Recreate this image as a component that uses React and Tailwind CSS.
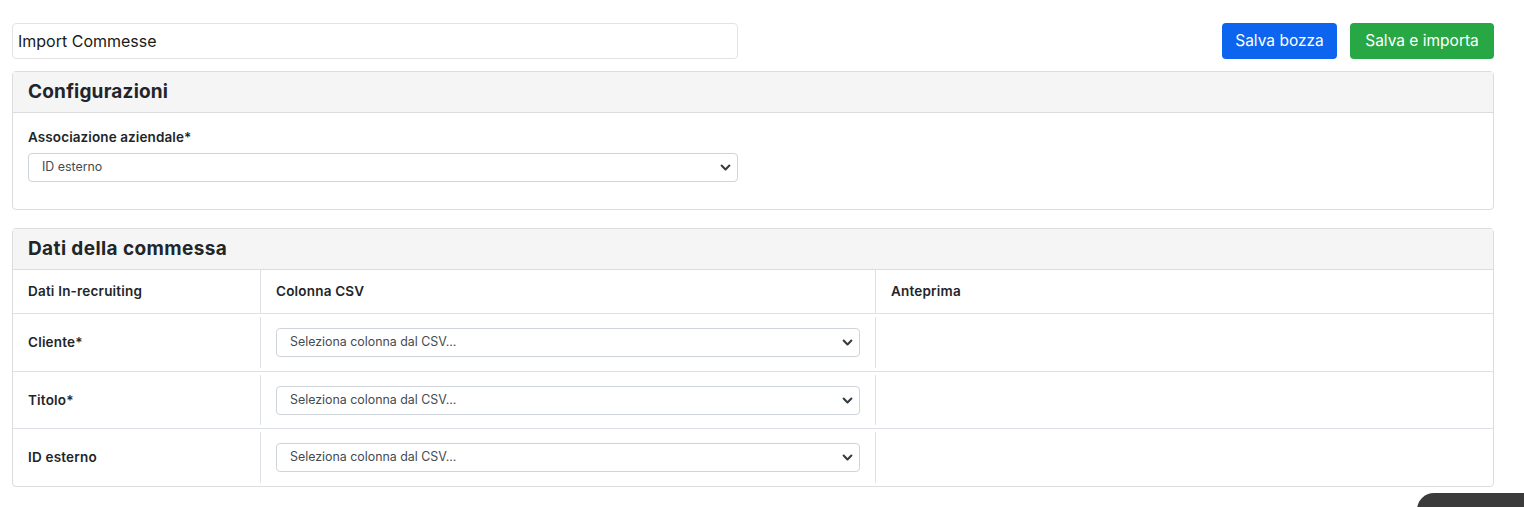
import React from "react";

function Chevron() {
  return (
    <svg width="11" height="7" viewBox="0 0 14 9" className="shrink-0">
      <path d="M2 2 L7 7 L12 2" fill="none" stroke="#343a40" strokeWidth="2.6" strokeLinecap="round" strokeLinejoin="round" />
    </svg>
  );
}

function Select({ text, className = "" }) {
  return (
    <div className={"flex h-[29px] items-center justify-between rounded-[4px] border border-[#ced4da] bg-white pl-[13px] pr-[6px] " + className}>
      <span className="text-[12.4px] text-[#444b52]">{text}</span>
      <Chevron />
    </div>
  );
}

const rows = [
  { label: "Cliente*", cls: "h-[58px] border-b border-[#dee2e6]" },
  { label: "Titolo*", cls: "h-[57px] border-b border-[#dee2e6]" },
  { label: "ID esterno", cls: "h-[57px]" },
];

export default function App() {
  return (
    <div className="relative min-h-[507px] bg-white px-[12px] pt-[23px] text-[#212529]" style={{ fontFamily: "Inter, 'Noto Sans', sans-serif" }}>
      <div className="flex items-center justify-between pr-[18px]">
        <div className="flex h-[36px] w-[726px] items-center rounded-[4px] border border-[#e3e3e3] pl-[5px] text-[16px] text-[#1a1a1a]">
          Import Commesse
        </div>
        <div className="flex gap-[13px]">
          <button className="h-[36px] w-[115px] rounded-[4px] bg-[#0d64ee] text-[15.5px] text-white">Salva bozza</button>
          <button className="h-[36px] w-[144px] rounded-[4px] bg-[#28a745] text-[15.5px] text-white">Salva e importa</button>
        </div>
      </div>

      <div className="mt-[12px] mr-[18px] rounded-[4px] border border-[#dcdcdc]">
        <div className="flex h-[41px] items-center border-b border-[#dcdcdc] bg-[#f5f5f5] px-[15px] text-[19px] font-bold tracking-[0.2px]">
          Configurazioni
        </div>
        <div className="px-[15px] pt-[14px] pb-[27px]">
          <div className="h-[20px] text-[13.5px] font-semibold leading-[20px] tracking-[0.1px]">Associazione aziendale*</div>
          <Select text="ID esterno" className="mt-[6px] w-[710px]" />
        </div>
      </div>

      <div className="mt-[18px] mr-[18px] rounded-[4px] border border-[#dcdcdc]">
        <div className="flex h-[41px] items-center border-b border-[#dcdcdc] bg-[#f5f5f5] px-[15px] text-[19px] font-bold tracking-[0.4px]">
          Dati della commessa
        </div>
        <div className="flex h-[44px] border-b border-[#dee2e6] text-[13.5px] font-semibold tracking-[0.2px]">
          <div className="flex w-[248px] items-center border-r border-[#dee2e6] px-[15px]">Dati In-recruiting</div>
          <div className="flex w-[615px] items-center border-r border-[#dee2e6] px-[15px]">Colonna CSV</div>
          <div className="flex flex-1 items-center px-[15px]">Anteprima</div>
        </div>
        {rows.map((r) => (
          <div key={r.label} className={"flex py-[3px] " + r.cls}>
            <div className="flex w-[248px] items-center border-r border-[#dee2e6] px-[15px] text-[13.5px] font-semibold tracking-[0.2px]">{r.label}</div>
            <div className="flex w-[615px] items-center border-r border-[#dee2e6] px-[15px]">
              <Select text="Seleziona colonna dal CSV..." className="w-full" />
            </div>
            <div className="flex-1" />
          </div>
        ))}
      </div>

      <div className="absolute bottom-[-20px] right-0 h-[34px] w-[107px] rounded-tl-[18px] rounded-bl-[18px] bg-[#3b3b3b]" />
    </div>
  );
}
